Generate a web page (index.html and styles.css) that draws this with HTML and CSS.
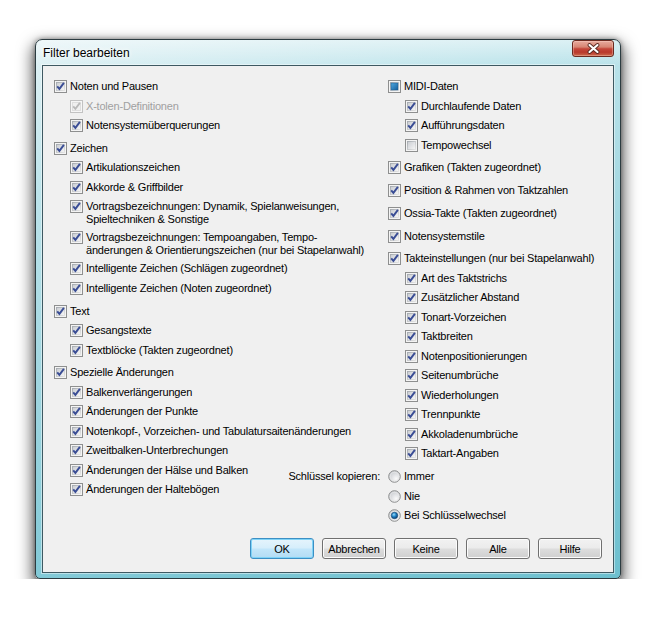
FILE: index.html
```html
<!DOCTYPE html>
<html lang="de">
<head>
    <meta charset="UTF-8">
    <title>Filter bearbeiten</title>
    <link rel="stylesheet" href="styles.css">
</head>
<body>
    <svg class="defs" aria-hidden="true">
        <defs>
            <linearGradient id="g-box" x1="0" y1="0" x2="1" y2="1">
                <stop offset="0" stop-color="#c9ccd1"/>
                <stop offset="1" stop-color="#f7f7f7"/>
            </linearGradient>
            <linearGradient id="g-box-line" x1="0" y1="0" x2="1" y2="1">
                <stop offset="0" stop-color="#a7acb2"/>
                <stop offset="1" stop-color="#e4e4e4"/>
            </linearGradient>
            <linearGradient id="g-mixed" x1="0" y1="0" x2="1" y2="1">
                <stop offset="0" stop-color="#4fa8e0"/>
                <stop offset="1" stop-color="#155f9c"/>
            </linearGradient>
            <radialGradient id="g-radio" cx="0.65" cy="0.7" r="0.75">
                <stop offset="0" stop-color="#fbfbfb"/>
                <stop offset="1" stop-color="#c6c9ce"/>
            </radialGradient>
            <radialGradient id="g-dot" cx="0.4" cy="0.35" r="0.65">
                <stop offset="0" stop-color="#9adcfb"/>
                <stop offset="0.5" stop-color="#2185c8"/>
                <stop offset="1" stop-color="#0c3f72"/>
            </radialGradient>
            <symbol id="cb" viewBox="0 0 13 13">
                <rect x="0.5" y="0.5" width="12" height="12" fill="#f4f4f4" stroke="#8e8f8f"/>
                <rect x="2.5" y="2.5" width="8" height="8" fill="url(#g-box)" stroke="url(#g-box-line)"/>
            </symbol>
            <symbol id="cb-on" viewBox="0 0 13 13">
                <use href="#cb"/>
                <path d="M3.2 6.3 5.4 8.9 9.9 2.9" fill="none" stroke="#3a4d95" stroke-width="1.9"/>
            </symbol>
            <symbol id="cb-dis" viewBox="0 0 13 13">
                <rect x="0.5" y="0.5" width="12" height="12" fill="#f6f6f6" stroke="#c2c2c2"/>
                <rect x="2.5" y="2.5" width="8" height="8" fill="#f0f0f0" stroke="#dedede"/>
                <path d="M3.2 6.3 5.4 8.9 9.9 2.9" fill="none" stroke="#b9b9b9" stroke-width="1.8"/>
            </symbol>
            <symbol id="cb-mixed" viewBox="0 0 13 13">
                <use href="#cb"/>
                <rect x="3" y="3" width="7" height="7" fill="url(#g-mixed)" stroke="#1d5a8a" stroke-width="0.5"/>
            </symbol>
            <symbol id="rb" viewBox="0 0 13 13">
                <circle cx="6.5" cy="6.5" r="5.8" fill="url(#g-radio)" stroke="#8e8f8f"/>
                <circle cx="6.5" cy="6.5" r="4.3" fill="none" stroke="#e9e9e9" stroke-width="0.8"/>
            </symbol>
            <symbol id="rb-on" viewBox="0 0 13 13">
                <use href="#rb"/>
                <circle cx="6.5" cy="6.5" r="3.2" fill="url(#g-dot)" stroke="#174a78" stroke-width="0.7"/>
            </symbol>
        </defs>
    </svg>

    <div class="window">
        <div class="titlebar">
            <span class="title">Filter bearbeiten</span>
            <button class="close" aria-label="Schließen">
                <svg viewBox="0 0 13 11" width="13" height="11">
                    <path d="M2.5 2 10.5 9M10.5 2 2.5 9" stroke="#5a2a22" stroke-width="3.8" stroke-linecap="round"/>
                    <path d="M2.5 2 10.5 9M10.5 2 2.5 9" stroke="#fff" stroke-width="2.1" stroke-linecap="round"/>
                </svg>
            </button>
        </div>

        <div class="client">
            <div class="columns">
                <div class="col col-left">
                    <div class="group">
                        <label class="opt"><svg class="box"><use href="#cb-on"/></svg><span>Noten und Pausen</span></label>
                        <div class="sub">
                            <label class="opt disabled"><svg class="box"><use href="#cb-dis"/></svg><span>X-tolen-Definitionen</span></label>
                            <label class="opt"><svg class="box"><use href="#cb-on"/></svg><span>Notensystemüberquerungen</span></label>
                        </div>
                    </div>
                    <div class="group">
                        <label class="opt"><svg class="box"><use href="#cb-on"/></svg><span>Zeichen</span></label>
                        <div class="sub">
                            <label class="opt"><svg class="box"><use href="#cb-on"/></svg><span>Artikulationszeichen</span></label>
                            <label class="opt"><svg class="box"><use href="#cb-on"/></svg><span>Akkorde &amp; Griffbilder</span></label>
                            <label class="opt two"><svg class="box"><use href="#cb-on"/></svg><span>Vortragsbezeichnungen: Dynamik, Spielanweisungen,<br>Spieltechniken &amp; Sonstige</span></label>
                            <label class="opt two"><svg class="box"><use href="#cb-on"/></svg><span>Vortragsbezeichnungen: Tempoangaben, Tempo-<br>änderungen &amp; Orientierungszeichen (nur bei Stapelanwahl)</span></label>
                            <label class="opt"><svg class="box"><use href="#cb-on"/></svg><span>Intelligente Zeichen (Schlägen zugeordnet)</span></label>
                            <label class="opt"><svg class="box"><use href="#cb-on"/></svg><span>Intelligente Zeichen (Noten zugeordnet)</span></label>
                        </div>
                    </div>
                    <div class="group">
                        <label class="opt"><svg class="box"><use href="#cb-on"/></svg><span>Text</span></label>
                        <div class="sub">
                            <label class="opt"><svg class="box"><use href="#cb-on"/></svg><span>Gesangstexte</span></label>
                            <label class="opt"><svg class="box"><use href="#cb-on"/></svg><span>Textblöcke (Takten zugeordnet)</span></label>
                        </div>
                    </div>
                    <div class="group">
                        <label class="opt"><svg class="box"><use href="#cb-on"/></svg><span>Spezielle Änderungen</span></label>
                        <div class="sub">
                            <label class="opt"><svg class="box"><use href="#cb-on"/></svg><span>Balkenverlängerungen</span></label>
                            <label class="opt"><svg class="box"><use href="#cb-on"/></svg><span>Änderungen der Punkte</span></label>
                            <label class="opt"><svg class="box"><use href="#cb-on"/></svg><span>Notenkopf-, Vorzeichen- und Tabulatursaitenänderungen</span></label>
                            <label class="opt"><svg class="box"><use href="#cb-on"/></svg><span>Zweitbalken-Unterbrechungen</span></label>
                            <label class="opt"><svg class="box"><use href="#cb-on"/></svg><span>Änderungen der Hälse und Balken</span></label>
                            <label class="opt"><svg class="box"><use href="#cb-on"/></svg><span>Änderungen der Haltebögen</span></label>
                        </div>
                    </div>
                </div>

                <div class="col col-right">
                    <div class="group">
                        <label class="opt"><svg class="box"><use href="#cb-mixed"/></svg><span>MIDI-Daten</span></label>
                        <div class="sub">
                            <label class="opt"><svg class="box"><use href="#cb-on"/></svg><span>Durchlaufende Daten</span></label>
                            <label class="opt"><svg class="box"><use href="#cb-on"/></svg><span>Aufführungsdaten</span></label>
                            <label class="opt"><svg class="box"><use href="#cb"/></svg><span>Tempowechsel</span></label>
                        </div>
                    </div>
                    <div class="group">
                        <label class="opt"><svg class="box"><use href="#cb-on"/></svg><span>Grafiken (Takten zugeordnet)</span></label>
                    </div>
                    <div class="group">
                        <label class="opt"><svg class="box"><use href="#cb-on"/></svg><span>Position &amp; Rahmen von Taktzahlen</span></label>
                    </div>
                    <div class="group">
                        <label class="opt"><svg class="box"><use href="#cb-on"/></svg><span>Ossia-Takte (Takten zugeordnet)</span></label>
                    </div>
                    <div class="group">
                        <label class="opt"><svg class="box"><use href="#cb-on"/></svg><span>Notensystemstile</span></label>
                    </div>
                    <div class="group">
                        <label class="opt"><svg class="box"><use href="#cb-on"/></svg><span>Takteinstellungen (nur bei Stapelanwahl)</span></label>
                        <div class="sub">
                            <label class="opt"><svg class="box"><use href="#cb-on"/></svg><span>Art des Taktstrichs</span></label>
                            <label class="opt"><svg class="box"><use href="#cb-on"/></svg><span>Zusätzlicher Abstand</span></label>
                            <label class="opt"><svg class="box"><use href="#cb-on"/></svg><span>Tonart-Vorzeichen</span></label>
                            <label class="opt"><svg class="box"><use href="#cb-on"/></svg><span>Taktbreiten</span></label>
                            <label class="opt"><svg class="box"><use href="#cb-on"/></svg><span>Notenpositionierungen</span></label>
                            <label class="opt"><svg class="box"><use href="#cb-on"/></svg><span>Seitenumbrüche</span></label>
                            <label class="opt"><svg class="box"><use href="#cb-on"/></svg><span>Wiederholungen</span></label>
                            <label class="opt"><svg class="box"><use href="#cb-on"/></svg><span>Trennpunkte</span></label>
                            <label class="opt"><svg class="box"><use href="#cb-on"/></svg><span>Akkoladenumbrüche</span></label>
                            <label class="opt"><svg class="box"><use href="#cb-on"/></svg><span>Taktart-Angaben</span></label>
                        </div>
                    </div>
                    <div class="group copy">
                        <div class="copy-label">Schlüssel kopieren:</div>
                        <div class="radios">
                            <label class="opt"><svg class="box"><use href="#rb"/></svg><span>Immer</span></label>
                            <label class="opt"><svg class="box"><use href="#rb"/></svg><span>Nie</span></label>
                            <label class="opt"><svg class="box"><use href="#rb-on"/></svg><span>Bei Schlüsselwechsel</span></label>
                        </div>
                    </div>
                </div>
            </div>

            <div class="buttons">
                <button class="btn btn-default">OK</button>
                <button class="btn">Abbrechen</button>
                <button class="btn">Keine</button>
                <button class="btn">Alle</button>
                <button class="btn">Hilfe</button>
            </div>
        </div>
    </div>
</body>
</html>
```

FILE: styles.css
```css
* {
    box-sizing: border-box;
}
body {
    margin: 0;
    background-color: #fff;
    font-family: "Liberation Sans", Arial, sans-serif;
    font-size: 11px;
    color: #000;
}
.defs {
    position: absolute;
    width: 0;
    height: 0;
}

/* window frame */
.window {
    width: 586px;
    height: 540px;
    margin: 39px 0 0 35px;
    padding: 0 6px 5px;
    display: flex;
    flex-direction: column;
    border: 1px solid #2c3c41;
    border-radius: 7px 7px 5px 5px;
    background:
        linear-gradient(to bottom, rgba(255,255,255,0.45), rgba(255,255,255,0) 26px),
        linear-gradient(165deg, #e2f2f5 0%, #bde4eb 22%, #a0d6e0 50%, #85cbd8 75%, #6dc0cf 100%);
    box-shadow: 0 7px 15px 3px rgba(0,0,0,0.6), 0 0 5px rgba(0,0,0,0.4);
}
.titlebar {
    height: 25px;
    display: flex;
    justify-content: space-between;
    align-items: flex-start;
}
.title {
    font-size: 12px;
    line-height: 26px;
    padding-left: 1px;
    text-shadow: 0 0 6px #fff, 0 0 4px #fff;
}
.close {
    width: 42px;
    height: 17px;
    padding: 0;
    display: flex;
    align-items: center;
    justify-content: center;
    border: 1px solid #6a2a20;
    border-radius: 3px;
    background: linear-gradient(to bottom, #e8ab9e 0%, #d78674 40%, #c4473a 52%, #b9392c 75%, #cc6a4c 100%);
    box-shadow: inset 0 0 0 1px rgba(255,220,210,0.35);
}

/* client area */
.client {
    flex: 1;
    display: flex;
    flex-direction: column;
    border: 1px solid #3e5962;
    background-color: #f0f0f0;
    box-shadow: 0 0 0 1px rgba(255,255,255,0.45);
}
.columns {
    flex: 1;
    display: flex;
    padding: 11px 0 0 11px;
}
.col-left {
    width: 334px;
}
.col-right {
    flex: 1;
}
.group + .group {
    margin-top: 3.25px;
}
.opt {
    display: flex;
    gap: 3px;
    padding: 3px 0 3.5px;
    line-height: 13px;
    letter-spacing: -0.2px;
    white-space: nowrap;
}
.opt.two {
    padding-bottom: 2px;
}
.box {
    width: 13px;
    height: 13px;
    flex: none;
}
.sub {
    padding-left: 16px;
}
.col-right .sub {
    padding-left: 17px;
}
.disabled {
    color: #a0a0a0;
}
.copy {
    display: flex;
    margin-left: -100px;
}
.copy-label {
    width: 100px;
    padding: 3px 8px 0 0;
    line-height: 13px;
    text-align: right;
    letter-spacing: -0.2px;
    white-space: nowrap;
}

/* buttons */
.buttons {
    display: flex;
    justify-content: flex-end;
    gap: 8px;
    padding: 0 11px 13px 0;
}
.btn {
    width: 64px;
    height: 21px;
    padding: 0;
    font: inherit;
    letter-spacing: -0.2px;
    color: #000;
    border: 1px solid #707070;
    border-radius: 3px;
    background: linear-gradient(to bottom, #f2f2f2 0%, #ebebeb 48%, #dddddd 52%, #cfcfcf 100%);
    box-shadow: inset 0 0 0 1px #fcfcfc;
}
.btn-default {
    border-color: #3c8fc4;
    background: linear-gradient(to bottom, #e5f4fc 0%, #d6eefb 48%, #c2e6fa 52%, #b3dcf4 100%);
    box-shadow: inset 0 0 0 1px #7fd3f7;
}
```
